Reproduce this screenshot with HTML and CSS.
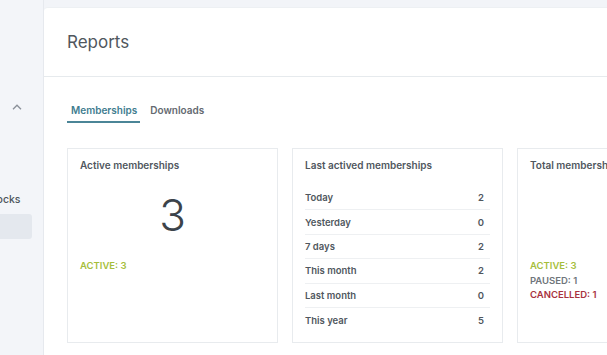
FILE: index.html
```html
<!DOCTYPE html>
<html>
<head>
<meta charset="utf-8">
<link rel="stylesheet" href="styles.css">
</head>
<body>
<div class="app">
  <aside class="sidebar">
    <div class="side-inner">
      <div class="toggle">
        <svg width="10" height="6" viewBox="0 0 10 6"><path d="M1 5.2 L5 1.2 L9 5.2" fill="none" stroke="#8a9099" stroke-width="1.3"/></svg>
      </div>
      <div class="side-item">Blocks</div>
      <div class="side-item active"></div>
    </div>
  </aside>
  <main class="panel">
    <header class="panel-head">
      <h1>Reports</h1>
    </header>
    <div class="panel-body">
      <nav class="tabs">
        <span class="tab current">Memberships</span>
        <span class="tab">Downloads</span>
      </nav>
      <div class="cards">
        <section class="card">
          <h2>Active memberships</h2>
          <div class="big">3</div>
          <div class="stats">
            <div class="st active">ACTIVE: 3</div>
          </div>
        </section>
        <section class="card">
          <h2>Last actived memberships</h2>
          <div class="rows">
            <div class="row"><span>Today</span><span>2</span></div>
            <div class="row"><span>Yesterday</span><span>0</span></div>
            <div class="row"><span>7 days</span><span>2</span></div>
            <div class="row"><span>This month</span><span>2</span></div>
            <div class="row"><span>Last month</span><span>0</span></div>
            <div class="row"><span>This year</span><span>5</span></div>
          </div>
        </section>
        <section class="card">
          <h2>Total memberships</h2>
          <div class="stats tall">
            <div class="st active">ACTIVE: 3</div>
            <div class="st paused">PAUSED: 1</div>
            <div class="st cancelled">CANCELLED: 1</div>
          </div>
        </section>
      </div>
    </div>
  </main>
</div>
</body>
</html>
```
FILE: styles.css
```css
* { box-sizing: border-box; }
html, body { margin: 0; padding: 0; }
body {
  width: 607px;
  height: 355px;
  overflow: hidden;
  background: #f2f4f8;
  font-family: Inter, "Noto Sans", sans-serif;
  color: #50575e;
}
.app {
  display: flex;
  height: 355px;
}
.sidebar {
  width: 44px;
  flex: none;
  background: #f3f5f9;
  border-right: 1px solid #e6e9ee;
  overflow: hidden;
}
.side-inner {
  margin-left: -14px;
  width: 60px;
  padding-top: 100px;
}
.toggle {
  height: 14px;
  padding-left: 26px;
  display: flex;
  align-items: center;
}
.side-item {
  font-size: 10.5px;
  font-weight: 500;
  color: #4e555c;
  margin-top: 79px;
  padding-left: 1px;
}
.side-item.active {
  margin-top: 8px;
  width: 46px;
  height: 25px;
  background: #e4e8ee;
  border-radius: 3px;
}
.panel {
  flex: 1;
  margin-top: 7px;
  background: #fff;
  border-top-left-radius: 4px;
  border-top: 1px solid #edf0f3;
  min-width: 0;
}
.panel-head {
  height: 69px;
  border-bottom: 1px solid #e6eaed;
  padding-left: 23px;
  display: flex;
  align-items: center;
}
.panel-head h1 {
  margin: 0;
  font-size: 17px;
  font-weight: 400;
  color: #50575e;
  margin-top: -1px;
}
.panel-body {
  padding: 27px 0 0 23px;
}
.tabs {
  display: flex;
  align-items: flex-start;
  gap: 9px;
  height: 19px;
}
.tab {
  font-size: 10px;
  font-weight: 600;
  color: #646970;
  line-height: 13px;
  padding: 0 1px 4px;
}
.tab.current {
  color: #3f7d8f;
  border-bottom: 2px solid #4b8597;
  padding: 0 3px 4px 4px;
}
.cards {
  display: flex;
  gap: 14px;
  margin-top: 25px;
}
.card {
  flex: none;
  width: 211px;
  height: 195px;
  border: 1px solid #e8ebee;
  padding: 10px 12px;
}
.card h2 {
  margin: 0;
  font-size: 10px;
  font-weight: 600;
  color: #50575e;
  line-height: 13px;
}
.big {
  text-align: center;
  font-size: 44px;
  font-weight: 300;
  color: #3c434a;
  line-height: 44px;
  margin-top: 21px;
}
.stats {
  margin-top: 22px;
}
.stats.tall {
  margin-top: 87px;
}
.st {
  font-size: 9.5px;
  font-weight: 600;
  line-height: 14.5px;
}
.st.active { color: #a6be3b; }
.st.paused { color: #6f757b; }
.st.cancelled { color: #a8323e; }
.rows {
  margin-top: 14px;
}
.row {
  display: flex;
  justify-content: space-between;
  font-size: 9.5px;
  font-weight: 600;
  color: #50575e;
  height: 24.4px;
  align-items: center;
  border-bottom: 1px solid #eef0f2;
  padding-right: 6px;
}
.row:last-child { border-bottom: none; }
```
